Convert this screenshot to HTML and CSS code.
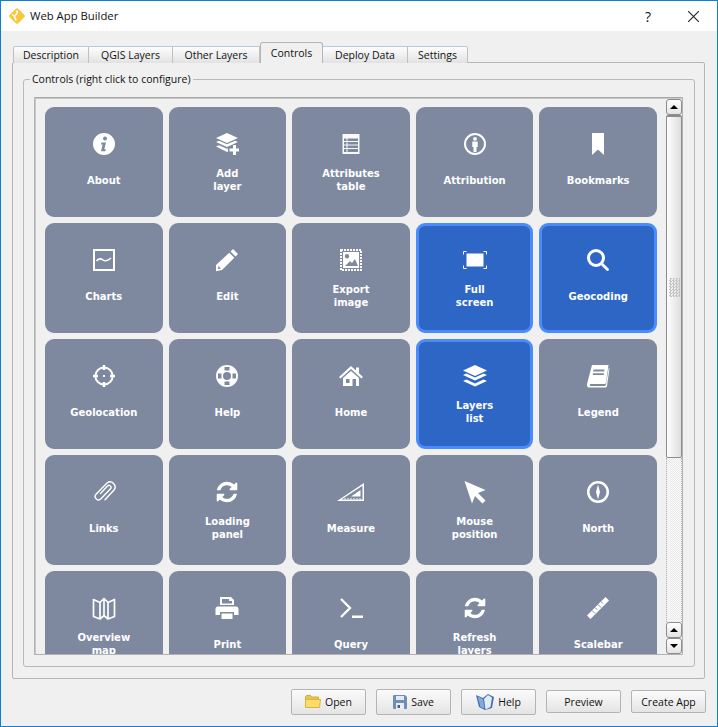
FILE: index.html
```html
<!DOCTYPE html>
<html lang="en">
<head>
    <meta charset="UTF-8">
    <title>Web App Builder</title>
    <link rel="stylesheet" href="styles.css">
</head>
<body>
    <svg class="sprites" width="0" height="0">
        <symbol id="refresh" viewBox="0 0 1792 1792">
            <path d="M1639 1056q0 5-1 7-64 268-268 434.5t-478 166.5q-146 0-282.5-55t-243.5-157l-129 129q-19 19-45 19t-45-19-19-45v-448q0-26 19-45t45-19h448q26 0 45 19t19 45-19 45l-137 137q71 66 161 102t187 36q134 0 250-65t186-179q11-17 53-117 8-23 30-23h192q13 0 22.5 9.5t9.5 22.5zm25-800v448q0 26-19 45t-45 19h-448q-26 0-45-19t-19-45 19-45l138-138q-148-137-349-137-134 0-250 65t-186 179q-11 17-53 117-8 23-30 23h-199q-13 0-22.5-9.5t-9.5-22.5v-7q65-268 270-434.5t480-166.5q146 0 284 55.5t245 156.5l130-129q19-19 45-19t45 19 19 45z"/>
        </symbol>
    </svg>
    <div class="window">
        <div class="titlebar">
            <svg class="logo" viewBox="0 0 16 16">
                <path d="M8 2l6 6-6 6-6-6z" fill="#f9c73a" stroke="#f9c73a" stroke-width="3.5" stroke-linejoin="round"/>
                <path d="M7.5 2.500c1.500 1.800.5 3.500-1 4.500-1.500 1-1 3 .8 5.500" fill="none" stroke="#fff" stroke-width="1.600"/>
                <path d="M3.500 6c.2 1.800 1 2.600 2.500 3" fill="none" stroke="#fff" stroke-width="1.200"/>
            </svg>
            <span class="title">Web App Builder</span>
            <span class="help-mark">?</span>
            <svg class="close" viewBox="0 0 10 10"><path d="M0 0l10 10M10 0L0 10" stroke="#222" stroke-width="1" fill="none"/></svg>
        </div>
        <div class="dialog">
            <div class="tabs">
                <div class="tab">Description</div>
                <div class="tab">QGIS Layers</div>
                <div class="tab">Other Layers</div>
                <div class="tab active">Controls</div>
                <div class="tab">Deploy Data</div>
                <div class="tab">Settings</div>
            </div>
            <div class="pane">
                <fieldset class="group">
                    <legend>Controls (right click to configure)</legend>
                    <div class="scroll-area">
                        <div class="viewport">
                            <div class="grid">
                                <div class="tile">
                                    <svg class="icon" viewBox="0 0 24 24"><path fill-rule="evenodd" d="M12 1a11 11 0 1 0 0 22 11 11 0 0 0 0-22zM13 4.500a2 2 0 1 1 0 4 2 2 0 0 1 0-4zM9.500 10.500h4.500l-1.700 6.800h1.500l-.5 2H9l1.700-6.800H9z"/></svg>
                                    <div class="label">About</div>
                                </div>
                                <div class="tile">
                                    <svg class="icon" viewBox="0 0 24 24"><path d="M12 1l11 5-11 5L1 6zM1 10l3-1.300 8 3.600 8-3.600 3 1.300-11 5zM1 14.500l3-1.300 8 3.600 1-.4v3.200l-1 .4z"/><path d="M18 13h3v3.500h3v3h-3V23h-3v-3.500h-3.500v-3H18z"/></svg>
                                    <div class="label">Add<br>layer</div>
                                </div>
                                <div class="tile">
                                    <svg class="icon" viewBox="0 0 24 24"><path fill-rule="evenodd" d="M3.500 2h17v20h-17zM5 6.500v2.500h2.500V6.500zM8.500 6.500v2.500H19V6.500zM5 10v2.500h2.500V10zM8.500 10v2.500H19V10zM5 13.500V16h2.500v-2.500zM8.500 13.500V16H19v-2.500zM5 17v3h2.500v-3zM8.500 17v3H19v-3z" opacity=".95"/></svg>
                                    <div class="label">Attributes<br>table</div>
                                </div>
                                <div class="tile">
                                    <svg class="icon" viewBox="0 0 24 24"><path fill-rule="evenodd" d="M12 1a11 11 0 1 0 0 22 11 11 0 0 0 0-22zM12 3a9 9 0 1 1 0 18 9 9 0 0 1 0-18z"/><circle cx="12" cy="6.800" r="1.900"/><path d="M9.300 9.500h5.400v5.500h-1.200V20h-3v-5H9.300z"/></svg>
                                    <div class="label">Attribution</div>
                                </div>
                                <div class="tile">
                                    <svg class="icon" viewBox="0 0 24 24"><path d="M6 1h12v22l-6-5.500L6 23z"/></svg>
                                    <div class="label">Bookmarks</div>
                                </div>

                                <div class="tile">
                                    <svg class="icon" viewBox="0 0 24 24"><path fill-rule="evenodd" d="M1 1h22v22H1zM3 3v18h18V3z"/><path d="M4.500 13c2.500-3 4.500-2.500 6.500-1s4 1.500 8-2" fill="none" stroke="#fff" stroke-width="1.500"/></svg>
                                    <div class="label">Charts</div>
                                </div>
                                <div class="tile">
                                    <svg class="icon" viewBox="0 0 24 24"><path fill-rule="evenodd" d="M18 1l5 5-2.500 2.500-5-5zM14.300 4.700l5 5L7 22l-6 1.200V17zM3.500 18l-.6 3 3-.6z"/></svg>
                                    <div class="label">Edit</div>
                                </div>
                                <div class="tile">
                                    <svg class="icon" viewBox="0 0 24 24"><path d="M2 2h20v20H2z" fill="none" stroke="#fff" stroke-width="2" stroke-dasharray="2 1"/><path fill-rule="evenodd" d="M4 4h16v16H4zM8 6a2.200 2.200 0 1 0 0 4.400A2.200 2.200 0 0 0 8 6z"/><path d="M6 18l5-5 2 2 3-4 3 7z" fill="#7e899f"/></svg>
                                    <div class="label">Export<br>image</div>
                                </div>
                                <div class="tile selected">
                                    <svg class="icon" viewBox="0 0 24 24"><path d="M3.500 5.500h17v13h-17z"/><path d="M.5 6.500v-3h3M20.500 3.500h3v3M23.500 17.500v3h-3M3.500 20.500h-3v-3" fill="none" stroke="#fff" stroke-width="1"/></svg>
                                    <div class="label">Full<br>screen</div>
                                </div>
                                <div class="tile selected">
                                    <svg class="icon" viewBox="0 0 24 24"><path fill-rule="evenodd" d="M10 1a9 9 0 1 0 0 18 9 9 0 0 0 0-18zM10 4a6 6 0 1 1 0 12 6 6 0 0 1 0-12z"/><path d="M15 17l2-2 5.500 5.500a1.400 1.400 0 0 1-2 2z"/></svg>
                                    <div class="label">Geocoding</div>
                                </div>

                                <div class="tile">
                                    <svg class="icon" viewBox="0 0 24 24"><circle cx="12" cy="12" r="8.600" fill="none" stroke="#fff" stroke-width="2"/><path d="M10.700 1h2.600v5h-2.600zM10.700 18h2.600v5h-2.600zM1 10.700h5v2.600H1zM18 10.700h5v2.600h-5zM11 11h2v2h-2z"/></svg>
                                    <div class="label">Geolocation</div>
                                </div>
                                <div class="tile">
                                    <svg class="icon" viewBox="0 0 24 24"><path fill-rule="evenodd" d="M12 1a11 11 0 1 0 0 22 11 11 0 0 0 0-22zM12 8a4 4 0 1 1 0 8 4 4 0 0 1 0-8zM9.500 3h5v3.500h-5zM9.500 17.500h5V21h-5zM3 9.500h3.500v5H3zM17.500 9.500H21v5h-3.500z"/></svg>
                                    <div class="label">Help</div>
                                </div>
                                <div class="tile">
                                    <svg class="icon" viewBox="0 0 24 24"><path d="M12 2L0 13l1.500 1.500L12 5l10.500 9.500L24 13l-4-3.700V3.500h-3v3z"/><path fill-rule="evenodd" d="M12 7l8 7v8H4v-8zM7 15v4h3.500v-4zM13.500 15v7h3.500v-7z"/></svg>
                                    <div class="label">Home</div>
                                </div>
                                <div class="tile selected">
                                    <svg class="icon" viewBox="0 0 24 24"><path d="M12 1l12 5.500L12 12 0 6.500zM0 11l3.500-1.500L12 13.400l8.500-3.900L24 11l-12 5.500zM0 17l3.500-1.500L12 19.400l8.500-3.900L24 17l-12 5.500z"/></svg>
                                    <div class="label">Layers<br>list</div>
                                </div>
                                <div class="tile">
                                    <svg class="icon" viewBox="0 0 24 24"><path fill-rule="evenodd" d="M6 1h16.500L20 18.500c-.2 1-.8 1.500-2 1.500H4.500c-1 0-1 2 .3 2H18c1 0 1.800-.6 2-1.500L22.800 4l.7.5L21 22c-.2 1-1 1.500-2 1.500H3C1.200 23.500.8 21.500 1 20zM7.500 5.500l-.3 2h11l.3-2zM7 9.300l-.3 1.700h11l.3-1.700z"/></svg>
                                    <div class="label">Legend</div>
                                </div>

                                <div class="tile">
                                    <svg class="icon" viewBox="0 0 24 24"><path d="M8.500 13.500l7-7.500a2 2 0 0 1 3 2.800L9 18.800a3.400 3.400 0 0 1-5-4.600L15 3a5 5 0 0 1 7 7l-9 9.800" fill="none" stroke="#fff" stroke-width="1.400" stroke-linecap="round"/></svg>
                                    <div class="label">Links</div>
                                </div>
                                <div class="tile">
                                    <svg class="icon"><use href="#refresh"/></svg>
                                    <div class="label">Loading<br>panel</div>
                                </div>
                                <div class="tile">
                                    <svg class="icon wide" viewBox="0 0 27 24"><path fill-rule="evenodd" d="M27 3v18H0zM25.500 5.800L4.500 19.500h21zM23.500 10v6.500h-9.500z"/><path d="M8 19.500v-1.500M11 19.500v-1.500M14 19.500v-1.500M17 19.500v-1.500M20 19.500v-1.500M23 19.500v-1.500" stroke="#fff" stroke-width="1" fill="none"/></svg>
                                    <div class="label">Measure</div>
                                </div>
                                <div class="tile">
                                    <svg class="icon" viewBox="0 0 24 24"><path d="M1.500 1l21 9-7.500 3 7.500 7.500-3 3-7.500-7.500-3 7.500z"/></svg>
                                    <div class="label">Mouse<br>position</div>
                                </div>
                                <div class="tile">
                                    <svg class="icon" viewBox="0 0 24 24"><path fill-rule="evenodd" d="M12 1a11 11 0 1 0 0 22 11 11 0 0 0 0-22zM12 3.500a8.500 8.500 0 1 1 0 17 8.500 8.500 0 0 1 0-17z"/><path d="M12 4.500l2 7.500-2 7.500-2-7.500z"/></svg>
                                    <div class="label">North</div>
                                </div>

                                <div class="tile">
                                    <svg class="icon" viewBox="0 0 24 24"><path d="M1.500 3.500l6.500 3 4-4 4 4 6.500-3v17l-6.500 2.500-4-3.500-4 3.500-6.500-2.500zM8 6.500V22M12 2.500V19.500M16 6.500V22" fill="none" stroke="#fff" stroke-width="1.700" stroke-linejoin="round"/></svg>
                                    <div class="label">Overview<br>map</div>
                                </div>
                                <div class="tile">
                                    <svg class="icon" viewBox="0 0 24 24"><path fill-rule="evenodd" d="M5 1h11l3 3v5H5zM7 3v4.500h10V5h-3V3zM3 10.500h18a2.500 2.500 0 0 1 2.500 2.500v6H19v-3H5v3H.5v-6A2.500 2.500 0 0 1 3 10.500z"/><path d="M6.500 17.500h11V23h-11z"/></svg>
                                    <div class="label">Print</div>
                                </div>
                                <div class="tile">
                                    <svg class="icon" viewBox="0 0 24 24"><path d="M2 3l9 9-9 9" fill="none" stroke="#fff" stroke-width="2.400"/><path d="M13 19.500h11V22H13z"/></svg>
                                    <div class="label">Query</div>
                                </div>
                                <div class="tile">
                                    <svg class="icon"><use href="#refresh"/></svg>
                                    <div class="label">Refresh<br>layers</div>
                                </div>
                                <div class="tile">
                                    <svg class="icon" viewBox="0 0 24 24"><path d="M19.500 1L23 4.500 4.500 23 1 19.500z"/><path d="M6 14.500l3 3M9 11.500l2 2M12 8.500l3 3M15 5.500l2 2" stroke="#7e899f" stroke-width="1" fill="none"/></svg>
                                    <div class="label">Scalebar</div>
                                </div>
                            </div>
                        </div>
                        <div class="scrollbar">
                            <div class="sb-button"><span class="arrow up"></span></div>
                            <div class="sb-handle"><span class="grip"></span></div>
                            <div class="sb-track"></div>
                            <div class="sb-button"><span class="arrow up"></span></div>
                            <div class="sb-button"><span class="arrow down"></span></div>
                        </div>
                    </div>
                </fieldset>
            </div>
            <div class="actions">
                <button class="btn tall" type="button">
                    <svg viewBox="0 0 16 13" width="16" height="13"><path d="M.5 3V1.500L1.500.5h4l1 1.500h7v3H.5z" fill="#e6c555" stroke="#cfae3c"/><path d="M.5 4.500h15l-1 8H.5z" fill="#fbdc6c" stroke="#d9b53b"/></svg>
                    Open
                </button>
                <button class="btn tall" type="button">
                    <svg viewBox="0 0 14 14" width="14" height="14"><path d="M1 0h11l2 2v11a1 1 0 0 1-1 1H1a1 1 0 0 1-1-1V1a1 1 0 0 1 1-1z" fill="#6f8fb3"/><path d="M3 1h8v4H3z" fill="#e4eaf1"/><path d="M3 8h8v6H3z" fill="#e9edf2"/><path d="M4.500 10H7v3H4.500z" fill="#4d5f72"/></svg>
                    Save
                </button>
                <button class="btn tall" type="button">
                    <svg viewBox="0 0 18 16" width="18" height="16"><path d="M0 1l7 3 5-4 6 3-2 11-7 2-6-3z" fill="#3f6fb2"/><path d="M8 5l4-4 4 2.500-1.500 9.500-5 2.500z" fill="#e3ebf6"/><path d="M1.500 2.500L7 5l1.500 9.500L4.500 13z" fill="#86a9d8"/></svg>
                    Help
                </button>
                <button class="btn" type="button">Preview</button>
                <button class="btn" type="button">Create App</button>
            </div>
        </div>
    </div>
</body>
</html>
```

FILE: styles.css
```css
* {
    margin: 0;
    padding: 0;
    box-sizing: border-box;
}
body {
    width: 718px;
    height: 727px;
    overflow: hidden;
    font-family: "Open Sans", sans-serif;
    font-size: 10.5px;
    color: #111;
}
.sprites {
    position: absolute;
}
.window {
    display: flex;
    flex-direction: column;
    height: 100%;
    border: 1px solid #0f7fd4;
    background: #f0f0f0;
}
.titlebar {
    display: flex;
    align-items: center;
    height: 30px;
    padding-left: 8px;
    background: #fff;
}
.logo {
    width: 16px;
    height: 16px;
}
.title {
    margin: 0 0 2px 5px;
    font-size: 11.3px;
    flex: 1;
}
.help-mark {
    width: 12px;
    margin-right: 34px;
    font-size: 14px;
    text-align: center;
}
.close {
    width: 11px;
    height: 11px;
    margin-right: 18px;
}
.dialog {
    flex: 1;
    display: flex;
    flex-direction: column;
    padding: 11px 12px 0 11px;
}
.tabs {
    display: flex;
    align-items: flex-end;
    height: 21px;
    padding-left: 1px;
    position: relative;
    z-index: 1;
}
.tab {
    height: 17px;
    line-height: 16px;
    text-align: center;
    border: 1px solid #c0c0c0;
    border-bottom: 0;
    border-left: 0;
    border-top-color: #b3cbdc;
    background: linear-gradient(#fdfdfd, #e2e2e2);
}
.tab:first-child {
    border-left: 1px solid #c0c0c0;
    border-top-left-radius: 2px;
}
.tab:nth-child(1) { width: 76px; }
.tab:nth-child(2) { width: 84px; }
.tab:nth-child(3) { width: 87px; }
.tab:nth-child(5) { width: 85px; }
.tab:nth-child(6) { width: 60px; border-top-right-radius: 2px; }
.tab.active {
    width: 63px;
    height: 21px;
    padding-top: 2px;
    border: 1px solid #b5b5b5;
    border-bottom: 0;
    border-radius: 3px 3px 0 0;
    background: #f0f0f0;
}
.pane {
    height: 617px;
    margin-top: -1px;
    padding: 8px 9px 0 10px;
    border: 1px solid #b5b5b5;
    border-radius: 2px;
}
.group {
    height: 596px;
    padding: 10px 11px 0 10px;
    border: 1px solid #b9b9b9;
    border-radius: 3px;
}
.group legend {
    margin-left: -4px;
    padding: 0 2px;
    line-height: 16px;
}
.scroll-area {
    display: flex;
    height: 558px;
    border: 1px solid #b2b2b2;
    border-top-color: #a8a8a8;
    box-shadow: inset 1px 1px #c8c8c8;
    border-radius: 1px;
}
.viewport {
    flex: 1;
    padding: 9px 8px 0 10px;
    overflow: hidden;
}
.grid {
    display: grid;
    grid-template-columns: repeat(5, 1fr);
    grid-auto-rows: 110px;
    gap: 6px;
}
.tile {
    display: flex;
    flex-direction: column;
    align-items: center;
    padding-top: 25px;
    border-radius: 9px;
    background: #7e899f;
    color: #fff;
    fill: #fff;
}
.tile.selected {
    padding-top: 22px;
    border: 3px solid #4a8cfb;
    background: #2d66c4;
}
.icon {
    width: 24px;
    height: 24px;
    flex: none;
}
.icon.wide {
    width: 27px;
}
.label {
    display: flex;
    align-items: center;
    height: 48px;
    font-family: "DejaVu Sans", sans-serif;
    font-size: 10px;
    font-weight: 700;
    line-height: 13px;
    text-align: center;
}
.scrollbar {
    display: flex;
    flex-direction: column;
    flex: none;
    width: 16px;
    margin: 1px 0 0 1px;
}
.sb-button {
    display: flex;
    align-items: center;
    justify-content: center;
    height: 16px;
    border: 1px solid #8c8c8c;
    border-radius: 3px;
    background: linear-gradient(#fff, #e4e4e4);
}
.arrow {
    width: 0;
    height: 0;
    border-left: 4px solid transparent;
    border-right: 4px solid transparent;
}
.arrow.up {
    border-bottom: 4px solid #000;
}
.arrow.down {
    border-top: 4px solid #000;
}
.sb-handle {
    display: flex;
    align-items: center;
    justify-content: center;
    height: 343px;
    border: 1px solid #8c8c8c;
    border-top: 2px solid #8c8c8c;
    border-radius: 2px;
    background: linear-gradient(90deg, #fdfdfd, #dedede);
}
.grip {
    width: 11px;
    height: 19px;
    background: repeating-conic-gradient(#c4c4c4 0 25%, transparent 0 50%) 0 0 / 3px 3px;
}
.sb-track {
    flex: 1;
    border-left: 1px dotted #b4b4b4;
    border-right: 1px dotted #b4b4b4;
    background: repeating-conic-gradient(#e9e9e9 0 25%, #fbfbfb 0 50%) 0 0 / 2px 2px;
}
.actions {
    display: flex;
    align-items: center;
    justify-content: flex-end;
    gap: 10px;
    height: 45px;
    margin-right: -1px;
}
.btn {
    display: flex;
    align-items: center;
    justify-content: center;
    gap: 4px;
    width: 75px;
    height: 23px;
    border: 1px solid #b4b4b4;
    border-radius: 2px;
    background: linear-gradient(#fbfbfb, #e4e4e4);
    font-family: inherit;
    font-size: 10.5px;
    color: #111;
}
.btn.tall {
    height: 26px;
}
```
